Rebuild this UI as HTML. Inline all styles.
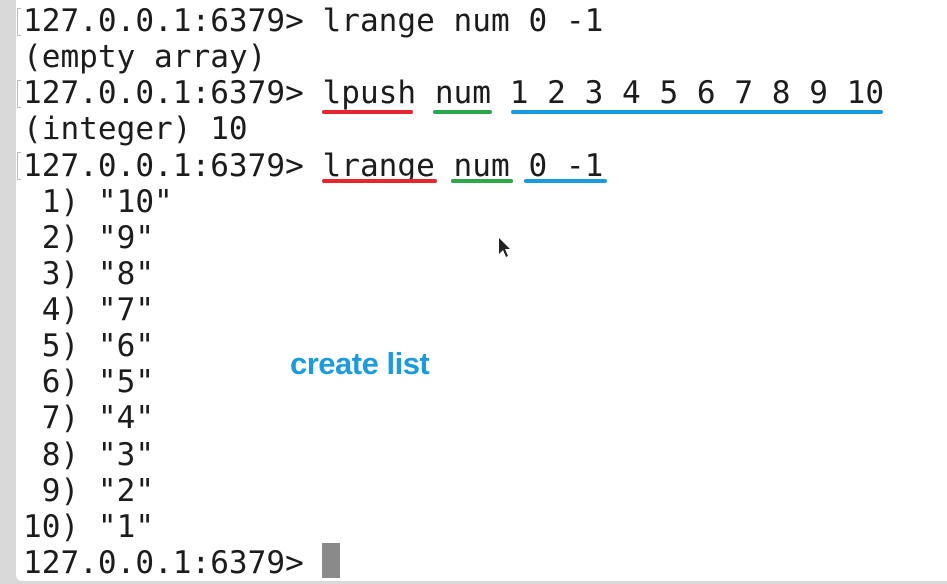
<!DOCTYPE html>
<html><head><style>
html,body{margin:0;padding:0;width:947px;height:584px;overflow:hidden;background:#d9d9d9}
.panel{position:absolute;left:16px;top:0;width:931px;height:581px;background:#fff;border-bottom-left-radius:6px}
pre{position:absolute;left:23px;top:3px;margin:0;font-family:"DejaVu Sans Mono","Liberation Mono",monospace;font-size:31.1px;line-height:36.13px;color:#1c1c1c;letter-spacing:0}
.u{position:absolute;height:4px;border-radius:2px}
.br{position:absolute;left:17px;width:3px;height:26px;border:1px solid #bbb;border-right:none}
.cur{position:absolute;left:322px;top:543px;width:18px;height:35px;background:#8a8a8a}
.lbl{position:absolute;left:290px;top:346px;font-family:"Liberation Sans",sans-serif;font-weight:bold;font-size:31px;color:#1a9be0;letter-spacing:-0.5px}
</style></head><body>
<div class="panel"></div>
<div class="br" style="top:8px"></div>
<div class="br" style="top:80px"></div>
<div class="br" style="top:152px"></div>
<pre>127.0.0.1:6379&gt; lrange num 0 -1
(empty array)
127.0.0.1:6379&gt; lpush num 1 2 3 4 5 6 7 8 9 10
(integer) 10
127.0.0.1:6379&gt; lrange num 0 -1
 1) "10"
 2) "9"
 3) "8"
 4) "7"
 5) "6"
 6) "5"
 7) "4"
 8) "3"
 9) "2"
10) "1"
127.0.0.1:6379&gt; </pre>
<div class="u" style="left:322px;top:110px;width:91px;background:#e8242c"></div>
<div class="u" style="left:433px;top:110px;width:59px;background:#2aa84a"></div>
<div class="u" style="left:511px;top:110px;width:372px;background:#1a9be0"></div>
<div class="u" style="left:322px;top:179px;width:115px;background:#e8242c"></div>
<div class="u" style="left:451px;top:179px;width:62px;background:#2aa84a"></div>
<div class="u" style="left:524px;top:179px;width:83px;background:#1a9be0"></div>
<div class="cur"></div>
<div class="lbl">create list</div>
<svg style="position:absolute;left:498px;top:237px" width="14" height="22" viewBox="0 0 14 22"><path d="M1 1 L1 17 L5 13 L8 20 L10 19 L7 12 L12 12 Z" fill="#222"/></svg>
</body></html>
